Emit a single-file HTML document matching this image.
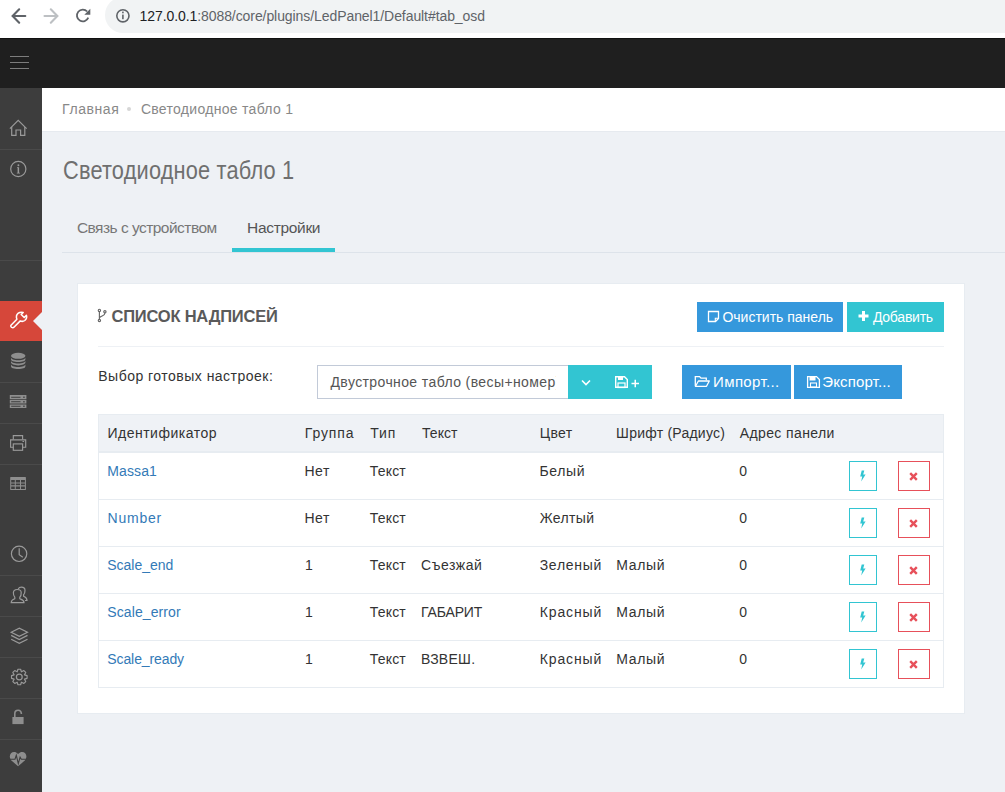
<!DOCTYPE html>
<html><head><meta charset="utf-8">
<style>
html,body{margin:0;padding:0;}
body{width:1005px;height:792px;overflow:hidden;position:relative;background:#eef1f5;font-family:"Liberation Sans",sans-serif;}
.a{position:absolute;}
.t{position:absolute;white-space:nowrap;line-height:1;font-size:14px;}
.ic{position:absolute;}
.sep{position:absolute;left:0;width:42px;height:1px;background:#4a4a4a;}
</style></head><body>
<div class="a" style="left:0;top:0;width:1005px;height:38px;background:#fff"></div>
<div class="a" style="left:105px;top:-3px;width:940px;height:36px;border-radius:18px;background:#f1f3f4"></div>
<svg class="ic" style="left:0;top:0" width="140" height="33" viewBox="0 0 140 33">
  <path d="M25.3 16H13.2M19.2 9.3L12.6 16L19.2 22.7" fill="none" stroke="#5f6368" stroke-width="2.1" stroke-linecap="round"/>
  <path d="M44.5 16H56.8M50.8 9.3L57.4 16L50.8 22.7" fill="none" stroke="#bdc0c3" stroke-width="2.1" stroke-linecap="round"/>
  <path d="M88.3 17.7A5.9 5.9 0 1 1 87.2 11.5" fill="none" stroke="#5f6368" stroke-width="1.8"/>
  <path d="M90.3 8.8V14.8H84.3Z" fill="#5f6368"/>
  <circle cx="122.9" cy="15.8" r="6.1" fill="none" stroke="#5f6368" stroke-width="1.6"/>
  <rect x="122.1" y="14.6" width="1.6" height="4.6" fill="#5f6368"/>
  <rect x="122.1" y="11.6" width="1.6" height="1.7" fill="#5f6368"/>
</svg>
<div class="a" style="left:0;top:38px;width:1005px;height:50px;background:#1f1f1f;border-top:1px solid #111;box-sizing:border-box"></div>
<div class="a" style="left:10px;top:56px;width:19px;height:1px;background:#7d7d7d"></div>
<div class="a" style="left:10px;top:62px;width:19px;height:1px;background:#7d7d7d"></div>
<div class="a" style="left:10px;top:68px;width:19px;height:1px;background:#7d7d7d"></div>
<div class="a" style="left:0;top:88px;width:42px;height:704px;background:#3d3d3d"></div>
<div class="sep" style="top:149px"></div>
<div class="sep" style="top:260px"></div>
<div class="sep" style="top:382px"></div>
<div class="sep" style="top:423px"></div>
<div class="sep" style="top:464px"></div>
<div class="sep" style="top:575px"></div>
<div class="sep" style="top:616px"></div>
<div class="sep" style="top:657px"></div>
<div class="sep" style="top:698px"></div>
<div class="sep" style="top:739px"></div>
<div class="a" style="left:0;top:301px;width:42px;height:40px;background:#d6473a"></div>
<div class="a" style="left:33px;top:312px;width:0;height:0;border-top:9px solid transparent;border-bottom:9px solid transparent;border-right:9px solid #eef1f5"></div>
<div class="a" style="left:42px;top:88px;width:963px;height:44px;background:#fff;border-bottom:1px solid #e6eaef;box-sizing:border-box"></div>
<div class="a" style="left:126.8px;top:106.8px;width:4.4px;height:4.4px;border-radius:50%;background:#d6d6d6"></div>
<div class="a" style="left:62px;top:252px;width:943px;height:1px;background:#dde3ea"></div>
<div class="a" style="left:232px;top:248px;width:103px;height:4px;background:#32c5d2"></div>

<svg class="ic" style="left:0;top:88px" width="42" height="704" viewBox="0 88 42 704">
<g fill="none" stroke="#9a9a9a" stroke-width="1.2" stroke-linejoin="miter">
 <!-- home -->
 <path d="M9.9 128.6L18.2 120.3L26.6 128.6"/>
 <path d="M11.7 127V135.4H16V130H20.6V135.4H24.8V127"/>
 <!-- info -->
 <circle cx="18.3" cy="169" r="7.6"/>
 <!-- clock -->
 <circle cx="19.1" cy="553.8" r="7.7"/>
 <path d="M19.2 548.2V554.7L22.8 557.2"/>
 <!-- users -->
 <path d="M11.2 602.6H24C24 600 21.5 599.5 19.8 598.7V597.2C21.2 596 21.3 594.3 21.2 592.5C21.1 590.3 19.5 589.5 17.2 589.5C15 589.5 13.5 590.5 13.4 592.6C13.3 594.3 13.5 596 14.8 597.2V598.7C13.2 599.5 11.2 600 11.2 602.6Z"/>
 <path d="M18.2 589C18.8 587.8 19.9 587.2 21.4 587.2C23.6 587.2 25 588.3 25 590.3C25 592 24.8 593.7 23.6 594.8V596.3C25 597 27 597.5 27 600.5H25"/>
 <!-- layers -->
 <path d="M11.2 632.2L19.3 628.2L27.5 632.2L19.3 636.4Z"/>
 <path d="M11.2 635.4L19.3 639.6L27.5 635.4"/>
 <path d="M11.2 639.2L19.3 643.4L27.5 639.2"/>
 <!-- gear -->
 <circle cx="19.3" cy="677" r="2.9"/>
</g>
<!-- info i -->
<path d="M17.6 167.2H19.1V172.7H20V173.6H16.8V172.7H17.6V168.1H17V167.2Z" fill="#9a9a9a"/>
<circle cx="18.4" cy="165.2" r="0.95" fill="#9a9a9a"/>
<!-- gear teeth -->
<path fill="none" stroke="#9a9a9a" stroke-width="1.15" stroke-linejoin="round" d="M17.17 671.82 L17.96 669.21 L20.64 669.21 L21.43 671.82 L21.46 671.83 L23.86 670.55 L25.75 672.44 L24.47 674.84 L24.48 674.87 L27.09 675.66 L27.09 678.34 L24.48 679.13 L24.47 679.16 L25.75 681.56 L23.86 683.45 L21.46 682.17 L21.43 682.18 L20.64 684.79 L17.96 684.79 L17.17 682.18 L17.14 682.17 L14.74 683.45 L12.85 681.56 L14.13 679.16 L14.12 679.13 L11.51 678.34 L11.51 675.66 L14.12 674.87 L14.13 674.84 L12.85 672.44 L14.74 670.55 L17.14 671.83Z"/>
<!-- db -->
<g fill="#8e8e8e">
 <ellipse cx="18.2" cy="355.8" rx="7.2" ry="3"/>
 <path d="M11 357.5C11 359 14 360.2 18.2 360.2C22.4 360.2 25.4 359 25.4 357.5V359.2C25.4 360.9 22.4 362 18.2 362C14 362 11 360.9 11 359.2Z"/>
 <path d="M11 360.7C11 362.3 14 363.5 18.2 363.5C22.4 363.5 25.4 362.3 25.4 360.7V362.6C25.4 364.2 22.4 365.4 18.2 365.4C14 365.4 11 364.2 11 362.6Z"/>
 <path d="M11 364.2C11 365.8 14 367 18.2 367C22.4 367 25.4 365.8 25.4 364.2V366.3C25.4 368 22.4 369.1 18.2 369.1C14 369.1 11 368 11 366.3Z"/>
</g>
<!-- server -->
<g fill="#8e8e8e">
 <path fill-rule="evenodd" d="M9.8 395H26.4V399.2H9.8ZM11.2 396.7V397.8H20.5V396.7ZM23.3 396.6V397.9H24.6V396.6Z"/>
 <path fill-rule="evenodd" d="M9.8 400H26.4V403.6H9.8ZM11.2 401.2V402.3H20.5V401.2ZM23.3 401.1V402.4H24.6V401.1Z"/>
 <path fill-rule="evenodd" d="M9.8 404.4H26.4V408.1H9.8ZM11.2 405.7V406.8H20.5V405.7ZM23.3 405.6V406.9H24.6V405.6Z"/>
</g>
<!-- printer -->
<g fill="none" stroke="#9a9a9a" stroke-width="1.15">
 <path d="M13.3 439.6V435.6H22.6V439.6"/>
 <path d="M13.3 447.2H10.6V439.9H25.7V447.2H22.6"/>
 <rect x="13.3" y="443.9" width="9.3" height="6.4"/>
</g>
<rect x="22.5" y="441" width="1.6" height="1" fill="#9a9a9a"/>
<!-- table -->
<path fill="#8e8e8e" fill-rule="evenodd" d="M10.2 477.5Q10.2 476.9 10.8 476.9H25.3Q25.9 476.9 25.9 477.5V489.6Q25.9 490.1 25.3 490.1H10.8Q10.2 490.1 10.2 489.6ZM11.2 480.1V482.4H14.8V480.1ZM15.8 480.1V482.4H20V480.1ZM21 480.1V482.4H24.9V480.1ZM11.2 483.4V485.3H14.8V483.4ZM15.8 483.4V485.3H20V483.4ZM21 483.4V485.3H24.9V483.4ZM11.2 486.5V488.9H14.8V486.5ZM15.8 486.5V488.9H20V486.5ZM21 486.5V488.9H24.9V486.5Z"/>
<!-- lock -->
<path d="M14.8 717.5V713.6C14.8 711.4 16.3 710.2 18.1 710.2C19.9 710.2 21.3 711.4 21.4 714" fill="none" stroke="#8e8e8e" stroke-width="1.6"/>
<rect x="12.4" y="717" width="11.2" height="7.1" fill="#8e8e8e"/>
<!-- heart -->
<path fill="#8e8e8e" d="M18.1 754C16.9 752.5 15.5 751.9 14 751.9C11.6 751.9 9.8 753.8 9.8 756.4C9.8 758.6 11.2 760.3 12.6 761.6L18.1 766.3L23.6 761.6C25 760.3 26.4 758.6 26.4 756.4C26.4 753.8 24.6 751.9 22.2 751.9C20.7 751.9 19.3 752.5 18.1 754Z"/>
<path fill="none" stroke="#3d3d3d" stroke-width="1.1" stroke-linejoin="miter" d="M9 759.2H15L16.3 755.3L18.3 763.6L20.1 757.2L21.3 759.2H27"/>
<!-- wrench -->
<path fill="none" stroke="#fff" stroke-width="1.5" stroke-linejoin="round" d="M11 325.2L16.9 319.3C16.2 317.5 16.4 314.7 18.3 313.2C19.8 312.1 21.7 312 23.2 312.4L21.2 314.5L24.2 317.5L26.4 315.3C27 317.1 26.5 319.2 24.8 320.5C23.3 321.5 21.7 321.6 20.3 320.9L14.2 327C13.5 327.7 12.5 327.8 11.6 327.4C10.8 326.9 10.5 325.8 11 325.2Z"/>
</svg>
<div class="a" style="left:77px;top:283px;width:888px;height:431px;background:#fff;border:1px solid #e7ecf1;box-sizing:border-box"></div>
<svg class="ic" style="left:94px;top:305px" width="18" height="20" viewBox="94 305 18 20">
 <g fill="none" stroke="#666" stroke-width="1.15">
  <circle cx="99.4" cy="310.4" r="1.15"/><circle cx="104.9" cy="311.7" r="1.15"/><circle cx="99.4" cy="320.5" r="1.15"/>
  <path d="M99.4 311.6V319.3M104.9 312.9C104.9 316 101.5 315.6 99.6 317.6"/>
 </g>
</svg>
<div class="a" style="left:98px;top:346px;width:846px;height:1px;background:#eef1f5"></div>
<div class="a" style="left:697px;top:302px;width:146px;height:30px;background:#3598dc"></div>
<svg class="ic" style="left:707px;top:310px" width="13" height="13" viewBox="0 0 13 13">
 <path d="M1.5 1.5H11.5V8.5L8.5 11.5H1.5Z" fill="none" stroke="#fff" stroke-width="1.3"/>
 <path d="M8.3 11.3V8.3H11.3" fill="none" stroke="#fff" stroke-width="1.1"/>
</svg>
<div class="a" style="left:847px;top:302px;width:97px;height:30px;background:#32c5d2"></div>
<svg class="ic" style="left:858px;top:311px" width="11" height="10" viewBox="0 0 11 10">
 <path d="M4 0H7V3.5H10.5V6.5H7V10H4V6.5H0.5V3.5H4Z" fill="#fff"/>
</svg>
<div class="a" style="left:317px;top:365px;width:252px;height:34px;border:1px solid #c2cad8;box-sizing:border-box;background:#fff"></div>
<div class="a" style="left:682px;top:365px;width:109px;height:34px;background:#3598dc"></div>
<svg class="ic" style="left:694px;top:375px" width="17" height="13" viewBox="0 0 17 13">
 <path d="M1.3 11.3V1.6H5.6L7 3.2H12.3V5.3" fill="none" stroke="#fff" stroke-width="1.3"/>
 <path d="M1.5 11.3L4.4 6H15.3L12.5 11.3Z" fill="none" stroke="#fff" stroke-width="1.3" stroke-linejoin="round"/>
</svg>
<div class="a" style="left:794px;top:365px;width:108px;height:34px;background:#3598dc"></div>
<svg class="ic" style="left:806px;top:375px" width="15" height="14" viewBox="0 0 15 14">
 <path d="M1.6 1.6H10.5L13.4 4.5V12.4H1.6Z" fill="none" stroke="#fff" stroke-width="1.3"/>
 <rect x="3.5" y="2" width="6" height="3.5" fill="#fff"/>
 <rect x="4.5" y="8" width="6" height="4" fill="none" stroke="#fff" stroke-width="1.1"/>
</svg>
<div class="a" style="left:98px;top:414px;width:846px;height:274px;border:1px solid #e7ecf1;box-sizing:border-box;background:#fff"></div>
<div class="a" style="left:99px;top:415px;width:844px;height:36px;background:#eff2f6"></div>
<div class="a" style="left:99px;top:451px;width:844px;height:2px;background:#e7ecf1"></div>

<div class="a" style="left:849px;top:461px;width:28px;height:30px;border:1px solid #32c5d2;box-sizing:border-box"></div>
<svg class="ic" style="left:859px;top:470px" width="8" height="12" viewBox="0 0 8 12"><path d="M2.7 0.6H5.3L4.2 4.4H6.6L2.2 11.4L3.2 6.5H1.2Z" fill="#32c5d2"/></svg>
<div class="a" style="left:898px;top:461px;width:32px;height:30px;border:1px solid #e7505a;box-sizing:border-box"></div>
<svg class="ic" style="left:909px;top:472px" width="9" height="9" viewBox="0 0 9 9"><path d="M1.2 1.2L7.8 7.8M7.8 1.2L1.2 7.8" stroke="#e7505a" stroke-width="2.4"/></svg>
<div class="a" style="left:99px;top:499px;width:844px;height:1px;background:#e7ecf1"></div>
<div class="a" style="left:849px;top:508px;width:28px;height:30px;border:1px solid #32c5d2;box-sizing:border-box"></div>
<svg class="ic" style="left:859px;top:517px" width="8" height="12" viewBox="0 0 8 12"><path d="M2.7 0.6H5.3L4.2 4.4H6.6L2.2 11.4L3.2 6.5H1.2Z" fill="#32c5d2"/></svg>
<div class="a" style="left:898px;top:508px;width:32px;height:30px;border:1px solid #e7505a;box-sizing:border-box"></div>
<svg class="ic" style="left:909px;top:519px" width="9" height="9" viewBox="0 0 9 9"><path d="M1.2 1.2L7.8 7.8M7.8 1.2L1.2 7.8" stroke="#e7505a" stroke-width="2.4"/></svg>
<div class="a" style="left:99px;top:546px;width:844px;height:1px;background:#e7ecf1"></div>
<div class="a" style="left:849px;top:555px;width:28px;height:30px;border:1px solid #32c5d2;box-sizing:border-box"></div>
<svg class="ic" style="left:859px;top:564px" width="8" height="12" viewBox="0 0 8 12"><path d="M2.7 0.6H5.3L4.2 4.4H6.6L2.2 11.4L3.2 6.5H1.2Z" fill="#32c5d2"/></svg>
<div class="a" style="left:898px;top:555px;width:32px;height:30px;border:1px solid #e7505a;box-sizing:border-box"></div>
<svg class="ic" style="left:909px;top:566px" width="9" height="9" viewBox="0 0 9 9"><path d="M1.2 1.2L7.8 7.8M7.8 1.2L1.2 7.8" stroke="#e7505a" stroke-width="2.4"/></svg>
<div class="a" style="left:99px;top:593px;width:844px;height:1px;background:#e7ecf1"></div>
<div class="a" style="left:849px;top:602px;width:28px;height:30px;border:1px solid #32c5d2;box-sizing:border-box"></div>
<svg class="ic" style="left:859px;top:611px" width="8" height="12" viewBox="0 0 8 12"><path d="M2.7 0.6H5.3L4.2 4.4H6.6L2.2 11.4L3.2 6.5H1.2Z" fill="#32c5d2"/></svg>
<div class="a" style="left:898px;top:602px;width:32px;height:30px;border:1px solid #e7505a;box-sizing:border-box"></div>
<svg class="ic" style="left:909px;top:613px" width="9" height="9" viewBox="0 0 9 9"><path d="M1.2 1.2L7.8 7.8M7.8 1.2L1.2 7.8" stroke="#e7505a" stroke-width="2.4"/></svg>
<div class="a" style="left:99px;top:640px;width:844px;height:1px;background:#e7ecf1"></div>
<div class="a" style="left:849px;top:649px;width:28px;height:30px;border:1px solid #32c5d2;box-sizing:border-box"></div>
<svg class="ic" style="left:859px;top:658px" width="8" height="12" viewBox="0 0 8 12"><path d="M2.7 0.6H5.3L4.2 4.4H6.6L2.2 11.4L3.2 6.5H1.2Z" fill="#32c5d2"/></svg>
<div class="a" style="left:898px;top:649px;width:32px;height:30px;border:1px solid #e7505a;box-sizing:border-box"></div>
<svg class="ic" style="left:909px;top:660px" width="9" height="9" viewBox="0 0 9 9"><path d="M1.2 1.2L7.8 7.8M7.8 1.2L1.2 7.8" stroke="#e7505a" stroke-width="2.4"/></svg>
<div class="t" style="left:139.50px;top:9.45px;font-size:14px;color:#5f6368;letter-spacing:-0.077px;"><span style="color:#202124">127.0.0.1</span>:8088/core/plugins/LedPanel1/Default#tab_osd</div>
<div class="t" style="left:62.00px;top:102.35px;font-size:14px;color:#888;letter-spacing:0.583px;">Главная</div>
<div class="t" style="left:140.90px;top:102.35px;font-size:14px;color:#888;letter-spacing:0.295px;">Светодиодное табло 1</div>
<div class="t" style="left:62.50px;top:158.24px;font-size:25px;color:#6f6f6f;letter-spacing:0.218px;transform:scaleX(0.87);transform-origin:0 0;">Светодиодное табло 1</div>
<div class="t" style="left:76.90px;top:220.38px;font-size:15.5px;color:#777;letter-spacing:-0.522px;">Связь с устройством</div>
<div class="t" style="left:247.00px;top:220.38px;font-size:15.5px;color:#555;letter-spacing:-0.312px;">Настройки</div>
<div class="t" style="left:111.50px;top:308.43px;font-size:16.5px;color:#5a5a5a;font-weight:700;letter-spacing:-0.214px;">СПИСОК НАДПИСЕЙ</div>
<div class="t" style="left:722.40px;top:310.15px;font-size:14px;color:#fff;">Очистить панель</div>
<div class="t" style="left:872.90px;top:310.15px;font-size:14px;color:#fff;letter-spacing:-0.229px;">Добавить</div>
<div class="t" style="left:98.30px;top:368.95px;font-size:14px;color:#333;letter-spacing:0.482px;">Выбор готовых настроек:</div>
<div class="t" style="left:330.50px;top:375.15px;font-size:14px;color:#555;letter-spacing:0.393px;">Двустрочное табло (весы+номер)</div>
<div class="t" style="left:713.10px;top:373.50px;font-size:15px;color:#fff;letter-spacing:0.350px;">Импорт...</div>
<div class="t" style="left:822.30px;top:373.50px;font-size:15px;color:#fff;letter-spacing:0.133px;">Экспорт...</div>
<div class="t" style="left:107.40px;top:426.35px;font-size:14px;color:#333;letter-spacing:0.508px;">Идентификатор</div>
<div class="t" style="left:304.80px;top:426.35px;font-size:14px;color:#333;letter-spacing:0.860px;">Группа</div>
<div class="t" style="left:370.30px;top:426.35px;font-size:14px;color:#333;letter-spacing:0.800px;">Тип</div>
<div class="t" style="left:422.10px;top:426.35px;font-size:14px;color:#333;">Текст</div>
<div class="t" style="left:539.70px;top:426.35px;font-size:14px;color:#333;letter-spacing:0.400px;">Цвет</div>
<div class="t" style="left:616.10px;top:426.35px;font-size:14px;color:#333;letter-spacing:0.231px;">Шрифт (Радиус)</div>
<div class="t" style="left:739.70px;top:426.35px;font-size:14px;color:#333;letter-spacing:0.391px;">Адрес панели</div>
<div class="t" style="left:107.30px;top:464.15px;font-size:14px;color:#337ab7;letter-spacing:0.100px;">Massa1</div>
<div class="t" style="left:304.50px;top:464.15px;font-size:14px;color:#333;letter-spacing:0.500px;">Нет</div>
<div class="t" style="left:369.80px;top:464.15px;font-size:14px;color:#333;letter-spacing:0.175px;">Текст</div>
<div class="t" style="left:539.50px;top:464.15px;font-size:14px;color:#333;letter-spacing:0.625px;">Белый</div>
<div class="t" style="left:739.30px;top:464.15px;font-size:14px;color:#333;">0</div>
<div class="t" style="left:107.50px;top:511.15px;font-size:14px;color:#337ab7;letter-spacing:0.780px;">Number</div>
<div class="t" style="left:304.50px;top:511.15px;font-size:14px;color:#333;letter-spacing:0.500px;">Нет</div>
<div class="t" style="left:369.80px;top:511.15px;font-size:14px;color:#333;letter-spacing:0.175px;">Текст</div>
<div class="t" style="left:539.70px;top:511.15px;font-size:14px;color:#333;letter-spacing:0.360px;">Желтый</div>
<div class="t" style="left:739.30px;top:511.15px;font-size:14px;color:#333;">0</div>
<div class="t" style="left:107.30px;top:558.15px;font-size:14px;color:#337ab7;letter-spacing:-0.025px;">Scale_end</div>
<div class="t" style="left:305.00px;top:558.15px;font-size:14px;color:#333;">1</div>
<div class="t" style="left:369.80px;top:558.15px;font-size:14px;color:#333;letter-spacing:0.175px;">Текст</div>
<div class="t" style="left:421.00px;top:558.15px;font-size:14px;color:#333;letter-spacing:0.517px;">Съезжай</div>
<div class="t" style="left:539.70px;top:558.15px;font-size:14px;color:#333;letter-spacing:0.717px;">Зеленый</div>
<div class="t" style="left:616.30px;top:558.15px;font-size:14px;color:#333;letter-spacing:0.650px;">Малый</div>
<div class="t" style="left:739.30px;top:558.15px;font-size:14px;color:#333;">0</div>
<div class="t" style="left:107.30px;top:605.15px;font-size:14px;color:#337ab7;letter-spacing:0.100px;">Scale_error</div>
<div class="t" style="left:305.00px;top:605.15px;font-size:14px;color:#333;">1</div>
<div class="t" style="left:369.80px;top:605.15px;font-size:14px;color:#333;letter-spacing:0.175px;">Текст</div>
<div class="t" style="left:421.00px;top:605.15px;font-size:14px;color:#333;letter-spacing:-0.133px;">ГАБАРИТ</div>
<div class="t" style="left:539.70px;top:605.15px;font-size:14px;color:#333;letter-spacing:0.883px;">Красный</div>
<div class="t" style="left:616.30px;top:605.15px;font-size:14px;color:#333;letter-spacing:0.650px;">Малый</div>
<div class="t" style="left:739.30px;top:605.15px;font-size:14px;color:#333;">0</div>
<div class="t" style="left:107.30px;top:652.15px;font-size:14px;color:#337ab7;letter-spacing:-0.100px;">Scale_ready</div>
<div class="t" style="left:305.00px;top:652.15px;font-size:14px;color:#333;">1</div>
<div class="t" style="left:369.80px;top:652.15px;font-size:14px;color:#333;letter-spacing:0.175px;">Текст</div>
<div class="t" style="left:421.00px;top:652.15px;font-size:14px;color:#333;letter-spacing:0.260px;">ВЗВЕШ.</div>
<div class="t" style="left:539.70px;top:652.15px;font-size:14px;color:#333;letter-spacing:0.883px;">Красный</div>
<div class="t" style="left:616.30px;top:652.15px;font-size:14px;color:#333;letter-spacing:0.650px;">Малый</div>
<div class="t" style="left:739.30px;top:652.15px;font-size:14px;color:#333;">0</div>
<div class="a" style="left:556px;top:366px;width:12px;height:32px;background:#fff"></div>
<div class="a" style="left:568px;top:365px;width:84px;height:34px;background:#32c5d2"></div>
<svg class="ic" style="left:580px;top:378px" width="12" height="9" viewBox="0 0 12 9">
 <path d="M2 2.5L6 6.5L10 2.5" fill="none" stroke="#fff" stroke-width="1.6"/>
</svg>
<svg class="ic" style="left:614px;top:375px" width="27" height="14" viewBox="0 0 27 14">
 <path d="M1.7 1.7H10.5L13.3 4.5V12.3H1.7Z" fill="none" stroke="#fff" stroke-width="1.4"/>
 <rect x="4" y="1.5" width="5" height="3.5" fill="#fff"/>
 <rect x="4" y="8" width="7" height="4.5" fill="none" stroke="#fff" stroke-width="1.2"/>
 <path d="M17.5 8.5H25M21.25 4.75V12.25" fill="none" stroke="#fff" stroke-width="1.5"/>
</svg>
</body></html>
